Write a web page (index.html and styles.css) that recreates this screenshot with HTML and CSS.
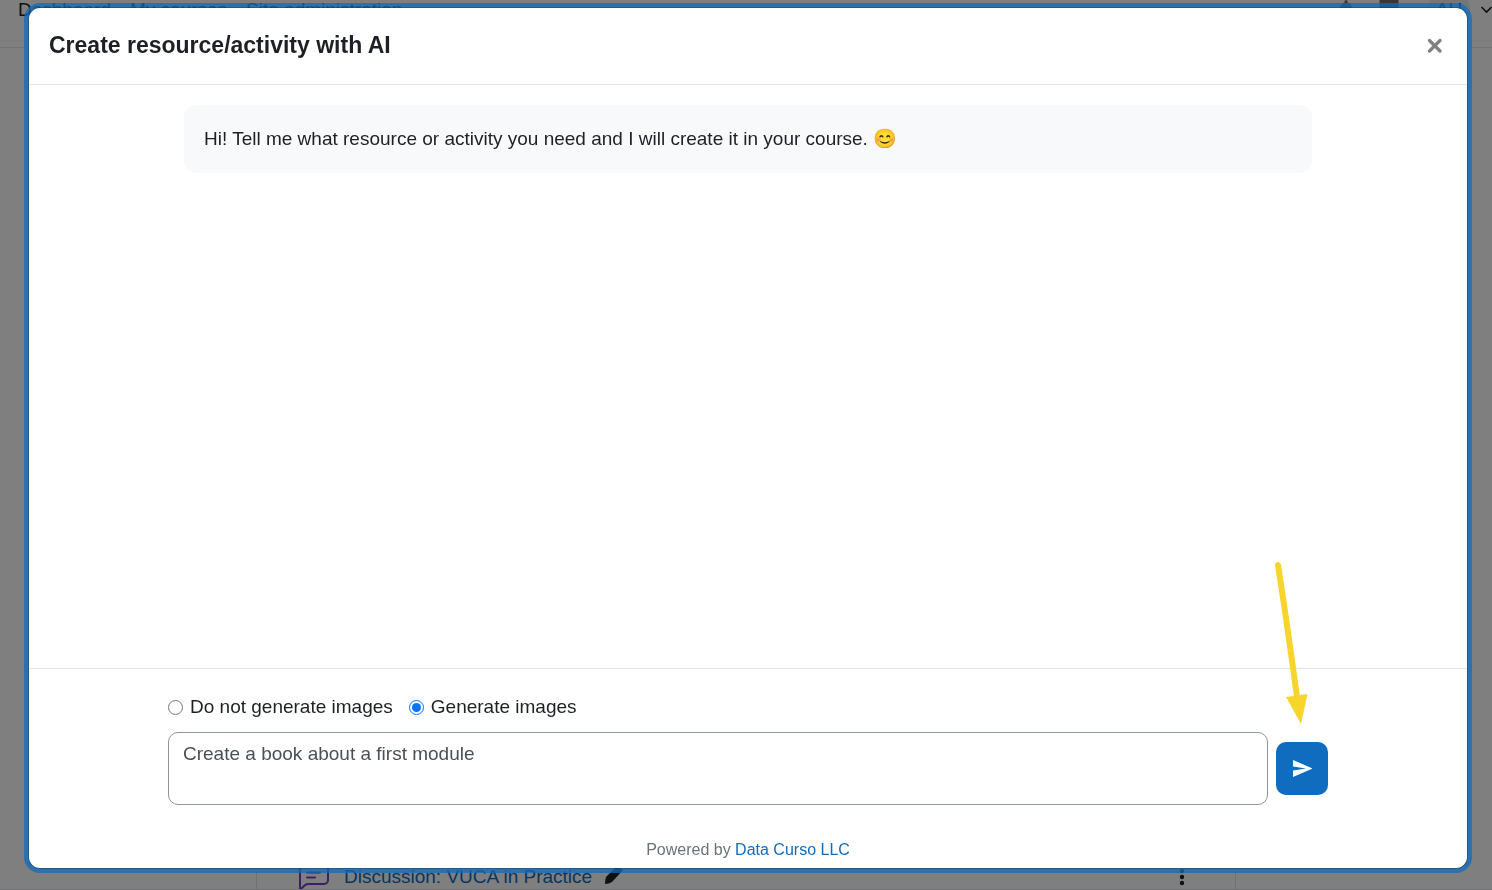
FILE: index.html
```html
<!DOCTYPE html>
<html lang="en">
<head>
<meta charset="utf-8">
<title>Create resource/activity with AI</title>
<link rel="stylesheet" href="styles.css">
</head>
<body>
<div class="page">
  <header class="topbar">
    <nav class="topbar-nav">
      <a href="#">Dashboard</a>
      <a href="#">My courses</a>
      <a href="#">Site administration</a>
    </nav>
    <div class="topbar-tools">
      <svg class="tool-icon" width="20" height="20" viewBox="0 0 20 20" aria-hidden="true"><path d="M10 0a1.500 1.500 0 0 1 1.500 1.500v1A6 6 0 0 1 16 8v5l2 3H2l2-3V8a6 6 0 0 1 4.500-5.500v-1A1.500 1.500 0 0 1 10 0z"/></svg>
      <svg class="tool-icon" width="20" height="20" viewBox="0 0 20 20" aria-hidden="true"><path d="M2.500-2h15A2 2 0 0 1 19.500 0v13a2 2 0 0 1-2 2H11l-5 4v-4H2.500a2 2 0 0 1-2-2V0a2 2 0 0 1 2-2z"/></svg>
      <button class="user-menu" type="button" aria-label="User menu">
        <span class="avatar">AU</span>
        <svg width="12" height="8" viewBox="0 0 12 8" fill="none" stroke="#1d2125" stroke-width="1.600" aria-hidden="true"><path d="M1.500 1 6.500 6l5-5"/></svg>
      </button>
    </div>
  </header>
  <main class="course">
    <div class="activity">
      <svg class="activity-icon" width="30" height="32" viewBox="0 0 30 32" fill="none" stroke="#7b3fd0" stroke-width="2" stroke-linecap="round" aria-hidden="true"><path d="M1 32V5a4 4 0 0 1 4-4h20a4 4 0 0 1 4 4v18a4 4 0 0 1-4 4H9q-2 0-4 2l-3 3M8 10h14M8 15.500h13M8 20.500h8"/></svg>
      <a class="activity-link" href="#">Discussion: VUCA in Practice</a>
      <svg class="activity-edit" width="22" height="22" viewBox="0 0 22 22" aria-hidden="true"><path d="M2 14 13 3l6 4L8 19q-3 2-7 2 0-4 1-7z" fill="#1d2125"/></svg>
      <button class="activity-menu" type="button" aria-label="Activity actions">
        <svg width="6" height="18" viewBox="0 0 6 18" fill="#1d2125" aria-hidden="true"><circle cx="3" cy="3" r="2.200"/><circle cx="3" cy="9" r="2.200"/><circle cx="3" cy="15" r="2.200"/></svg>
      </button>
    </div>
  </main>
</div>

<div class="backdrop">
  <section class="modal" role="dialog" aria-modal="true" aria-labelledby="modal-title">
    <header class="modal-header">
      <h1 class="modal-title" id="modal-title">Create resource/activity with AI</h1>
      <button class="close" type="button" aria-label="Close">
        <svg width="16" height="16" viewBox="0 0 16 16" fill="none" stroke="#808080" stroke-width="3.200" stroke-linecap="round" aria-hidden="true"><path d="M2.500 3.500l10.500 10.500M13 3.500l-10.500 10.500"/></svg>
      </button>
    </header>
    <div class="modal-body">
      <p class="message">Hi! Tell me what resource or activity you need and I will create it in your course. 😊</p>
    </div>
    <footer class="modal-footer">
      <form class="prompt">
        <div class="options">
          <label class="option" for="images-no"><input type="radio" id="images-no" name="images">Do not generate images</label>
          <label class="option" for="images-yes"><input type="radio" id="images-yes" name="images" checked>Generate images</label>
        </div>
        <div class="compose">
          <textarea class="prompt-text" aria-label="Prompt">Create a book about a first module</textarea>
          <button class="send" type="button" aria-label="Send">
            <svg width="20" height="18" viewBox="0 0 20 18" fill="#fff" aria-hidden="true"><path d="M1 0 20.500 8.500 1 17v-6.500l13-2L1 6.500z"/></svg>
          </button>
        </div>
      </form>
      <p class="credit">Powered by <a href="#">Data Curso LLC</a></p>
    </footer>
    <svg class="pointer" width="36" height="164" viewBox="0 0 36 164" aria-hidden="true"><path d="M8 4Q16 55 27 136" fill="none" stroke="#f7d52d" stroke-width="6" stroke-linecap="round"/><path d="M16 136 37.500 133 31 163z" fill="#f7d52d"/></svg>
  </section>
</div>
</body>
</html>
```

FILE: styles.css
```css
* {
  box-sizing: border-box;
}

body {
  margin: 0;
  background: #fff;
  color: #1d2125;
  font: 19px/28px "Liberation Sans", Arial, sans-serif;
}

button {
  padding: 0;
  border: 0;
  background: none;
  font: inherit;
  color: inherit;
}

a {
  color: #0f6cbf;
  text-decoration: none;
}

.page {
  display: flex;
  flex-direction: column;
  height: 100vh;
  overflow: hidden;
  border-bottom: 1px solid #dee2e6;
}

.topbar {
  display: flex;
  justify-content: space-between;
  height: 48px;
  padding-left: 18px;
  border-bottom: 1px solid #dee2e6;
}

.topbar-nav {
  display: flex;
  gap: 19px;
  line-height: 20px;
}

.topbar-nav a {
  color: #1d2125;
}

.topbar-tools {
  display: flex;
  align-items: flex-start;
  gap: 23px;
}

.tool-icon {
  fill: #6a737b;
}

.user-menu {
  display: flex;
  gap: 10px;
  align-items: center;
  height: 20px;
  margin-left: 6px;
}

.avatar {
  width: 42px;
  height: 42px;
  border-radius: 50%;
  background: #e9ecef;
  line-height: 42px;
}

.course {
  display: flex;
  flex: 1;
  align-items: flex-end;
  width: 980px;
  max-width: 100%;
  margin: 0 auto;
  padding: 0 50px 0 42px;
  border: solid #dee2e6;
  border-width: 0 1px;
}

.activity {
  display: flex;
  flex: 1;
  align-items: flex-end;
  height: 32px;
  line-height: 24px;
}

.activity-icon {
  margin-right: 15px;
}

.activity-edit {
  margin: 0 auto 4px 12px;
}

.activity-menu {
  display: flex;
  padding-bottom: 3px;
}

.backdrop {
  position: fixed;
  inset: 0;
  display: flex;
  padding: 7px 24px 21px 28px;
  background: rgba(0, 0, 0, 0.5);
}

.modal {
  position: relative;
  display: flex;
  flex: 1;
  flex-direction: column;
  border: 1px solid rgba(0, 0, 0, 0.2);
  border-radius: 12px;
  background: #fff;
  background-clip: padding-box;
  box-shadow: 0 0 0 4px rgba(15, 108, 191, 0.75);
}

.modal-header {
  display: flex;
  align-items: center;
  justify-content: space-between;
  height: 77px;
  padding: 0 24px 2px 20px;
  border-bottom: 1px solid #dee2e6;
}

.modal-title {
  margin: 0;
  font-size: 23px;
  line-height: 36px;
}

.close {
  display: flex;
}

.modal-body {
  flex: 1;
  padding: 20px 40px;
}

.message {
  max-width: 1128px;
  margin: 0 auto;
  padding: 20px;
  border-radius: 12px;
  background: #f8f9fa;
}

.modal-footer {
  padding: 24px 40px 4px;
  border-top: 1px solid #dee2e6;
}

.prompt {
  max-width: 1160px;
  margin: 0 auto;
}

.options {
  display: flex;
  gap: 16px;
}

.option {
  display: flex;
  align-items: center;
  gap: 7px;
}

.option input {
  width: 15px;
  height: 15px;
  margin: 0;
}

.compose {
  display: flex;
  align-items: center;
  gap: 8px;
  margin-top: 11px;
}

.prompt-text {
  flex: 1;
  height: 73px;
  padding: 7px 14px;
  border: 1px solid #8f959e;
  border-radius: 10px;
  background: #fff;
  color: #495057;
  font: inherit;
  resize: none;
}

.send {
  display: grid;
  place-items: center;
  width: 52px;
  height: 53px;
  border-radius: 10px;
  background: #0f6cbf;
}

.credit {
  margin: 30px 0 0;
  color: #6a737b;
  font-size: 16px;
  line-height: 29px;
  text-align: center;
}

.pointer {
  position: absolute;
  right: 161px;
  bottom: 143px;
  overflow: visible;
}
```
